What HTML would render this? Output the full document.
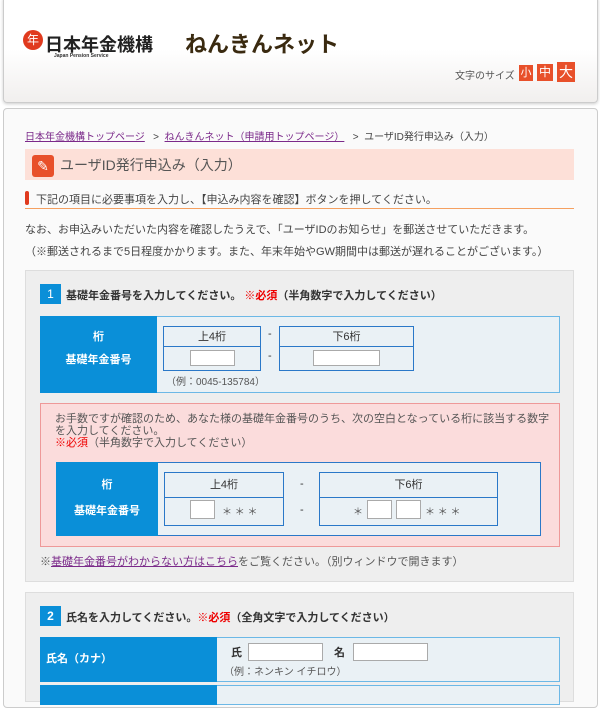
<!DOCTYPE html><html><head><meta charset="utf-8"><style>
*{margin:0;padding:0;box-sizing:border-box}
body{width:600px;height:691px;overflow:hidden;background:#fff;font-family:"Liberation Sans","Noto Sans CJK JP",sans-serif;color:#333;position:relative}
.a{position:absolute;white-space:nowrap}
.bl{background:#0a8fd8;color:#fff;font-weight:bold;font-size:11px}
.lb{background:#eaf1f5;border:1px solid #6cb8e6}
.sb{position:absolute;border:1px solid #2a78c8;background:#eaf1f5}
.sb .h{height:20px;border-bottom:1px solid #2a78c8;text-align:center;font-size:11px;line-height:20px}
.in{position:absolute;background:#fff;border:1px solid #aaa}
</style></head><body>
<div class="a" style="left:3px;top:-4px;width:595px;height:107px;border:1px solid #ccc;border-radius:4px;background:linear-gradient(#fff 50%,#f1efee);box-shadow:0 1px 3px #ccc"></div>
<div class="a" style="left:23px;top:30px;width:20px;height:20px;border-radius:50%;background:#e03a1e;color:#fff;font-size:12px;text-align:center;line-height:20px">年</div>
<div class="a" style="left:45px;top:31px;font-size:18px;font-weight:bold;color:#222">日本年金機構</div>
<div class="a" style="left:54px;top:53px;font-size:5px;font-weight:bold">Japan Pension Service</div>
<div class="a" style="left:185px;top:27px;font-size:22px;font-weight:bold;color:#3a2a10">ねんきんネット</div>
<div class="a" style="left:455px;top:67px;font-size:10px;color:#555">文字のサイズ</div>
<div class="a" style="left:519px;top:65px;width:14px;height:16px;background:#e8502a;color:#fff;font-size:11px;text-align:center;line-height:16px">小</div>
<div class="a" style="left:537px;top:64px;width:16px;height:17px;background:#e8502a;color:#fff;font-size:12px;text-align:center;line-height:17px">中</div>
<div class="a" style="left:557px;top:62px;width:18px;height:20px;background:#e8502a;color:#fff;font-size:14px;text-align:center;line-height:20px">大</div>

<div class="a" style="left:3px;top:108px;width:595px;height:600px;border:1px solid #ccc;border-radius:4px;background:#fafafa"></div>
<div class="a" style="left:25px;top:128px;font-size:10px;color:#444"><span style="color:#7b2a8a;text-decoration:underline">日本年金機構トップページ</span>&nbsp;&nbsp;&nbsp;&gt;&nbsp;&nbsp;<span style="color:#7b2a8a;text-decoration:underline">ねんきんネット（申請用トップページ）</span>&nbsp;&nbsp;&nbsp;&gt;&nbsp;&nbsp;ユーザID発行申込み（入力）</div>
<div class="a" style="left:25px;top:149px;width:549px;height:31px;background:#fde0d8"></div>
<div class="a" style="left:32px;top:155px;width:22px;height:22px;background:#e8502a;border-radius:3px;color:#fff;font-size:14px;text-align:center;line-height:22px">✎</div>
<div class="a" style="left:60px;top:155px;font-size:14px;color:#555">ユーザID発行申込み（入力）</div>
<div class="a" style="left:25px;top:191px;width:4px;height:14px;background:#e03a1e;border-radius:2px"></div>
<div class="a" style="left:36px;top:191px;font-size:11px;color:#444">下記の項目に必要事項を入力し、【申込み内容を確認】ボタンを押してください。</div>
<div class="a" style="left:25px;top:208px;width:549px;height:1px;background:#f5a060"></div>
<div class="a" style="left:25px;top:221px;font-size:11px;color:#444">なお、お申込みいただいた内容を確認したうえで、「ユーザIDのお知らせ」を郵送させていただきます。</div>
<div class="a" style="left:25px;top:243px;font-size:11px;color:#444">（※郵送されるまで5日程度かかります。また、年末年始やGW期間中は郵送が遅れることがございます。）</div>

<div class="a" style="left:25px;top:270px;width:549px;height:312px;background:#eee;border:1px solid #ddd"></div>
<div class="a" style="left:40px;top:284px;width:21px;height:20px;background:#0a8fd8;color:#fff;font-size:12px;text-align:center;line-height:20px">1</div>
<div class="a" style="left:66px;top:287px;font-size:11px;font-weight:bold">基礎年金番号を入力してください。 <span style="color:#e00">※必須</span>（半角数字で入力してください）</div>
<div class="a lb" style="left:40px;top:316px;width:520px;height:77px"></div>
<div class="a bl" style="left:40px;top:316px;width:117px;height:77px;text-align:center;line-height:23px;padding-top:10px">桁<br>基礎年金番号</div>
<div class="sb" style="left:163px;top:326px;width:98px;height:45px"><div class="h">上4桁</div></div>
<div class="in" style="left:190px;top:350px;width:45px;height:16px"></div>
<div class="a" style="left:268px;top:328px;font-size:11px">-</div><div class="a" style="left:268px;top:350px;font-size:11px">-</div>
<div class="sb" style="left:279px;top:326px;width:135px;height:45px"><div class="h">下6桁</div></div>
<div class="in" style="left:313px;top:350px;width:67px;height:16px"></div>
<div class="a" style="left:166px;top:373px;font-size:10px;color:#555">（例：0045-135784）</div>

<div class="a" style="left:40px;top:403px;width:520px;height:144px;background:#fbdcdc;border:1px solid #e99"></div>
<div class="a" style="left:55px;top:413px;font-size:11px;color:#555;line-height:12px;white-space:normal;width:500px">お手数ですが確認のため、あなた様の基礎年金番号のうち、次の空白となっている桁に該当する数字を入力してください。<br><span style="color:#e00">※必須</span>（半角数字で入力してください）</div>
<div class="a" style="left:56px;top:462px;width:485px;height:74px;background:#eaf1f5;border:1px solid #2a78c8"></div>
<div class="a bl" style="left:56px;top:462px;width:102px;height:74px;text-align:center;line-height:26px;padding-top:10px">桁<br>基礎年金番号</div>
<div class="sb" style="left:164px;top:472px;width:120px;height:54px"><div class="h" style="height:25px;line-height:25px">上4桁</div></div>
<div class="in" style="left:190px;top:500px;width:25px;height:19px"></div>
<div class="a" style="left:222px;top:503px;font-size:10px;color:#555">＊ ＊ ＊</div>
<div class="a" style="left:300px;top:478px;font-size:11px">-</div><div class="a" style="left:300px;top:504px;font-size:11px">-</div>
<div class="sb" style="left:319px;top:472px;width:179px;height:54px"><div class="h" style="height:25px;line-height:25px">下6桁</div></div>
<div class="a" style="left:353px;top:503px;font-size:10px;color:#555">＊</div>
<div class="in" style="left:367px;top:500px;width:25px;height:19px"></div>
<div class="in" style="left:396px;top:500px;width:25px;height:19px"></div>
<div class="a" style="left:425px;top:503px;font-size:10px;color:#555">＊ ＊ ＊</div>
<div class="a" style="left:40px;top:553px;font-size:11px;color:#555">※<span style="color:#7b2a8a;text-decoration:underline">基礎年金番号がわからない方はこちら</span>をご覧ください。（別ウィンドウで開きます）</div>

<div class="a" style="left:25px;top:592px;width:549px;height:110px;background:#eee;border:1px solid #ddd"></div>
<div class="a" style="left:40px;top:606px;width:21px;height:20px;background:#0a8fd8;color:#fff;font-size:12px;font-weight:bold;text-align:center;line-height:20px">2</div>
<div class="a" style="left:66px;top:609px;font-size:11px;font-weight:bold">氏名を入力してください。<span style="color:#e00">※必須</span>（全角文字で入力してください）</div>
<div class="a lb" style="left:40px;top:637px;width:520px;height:45px"></div>
<div class="a bl" style="left:40px;top:637px;width:177px;height:45px;line-height:45px;padding-left:6px">氏名（カナ）</div>
<div class="a" style="left:231px;top:644px;font-size:11px;font-weight:bold">氏</div>
<div class="in" style="left:248px;top:643px;width:75px;height:18px"></div>
<div class="a" style="left:334px;top:644px;font-size:11px;font-weight:bold">名</div>
<div class="in" style="left:353px;top:643px;width:75px;height:18px"></div>
<div class="a" style="left:224px;top:663px;font-size:10px;color:#555">（例：ネンキン イチロウ）</div>
<div class="a lb" style="left:40px;top:685px;width:520px;height:20px"></div>
<div class="a bl" style="left:40px;top:685px;width:177px;height:20px"></div>
</body></html>
